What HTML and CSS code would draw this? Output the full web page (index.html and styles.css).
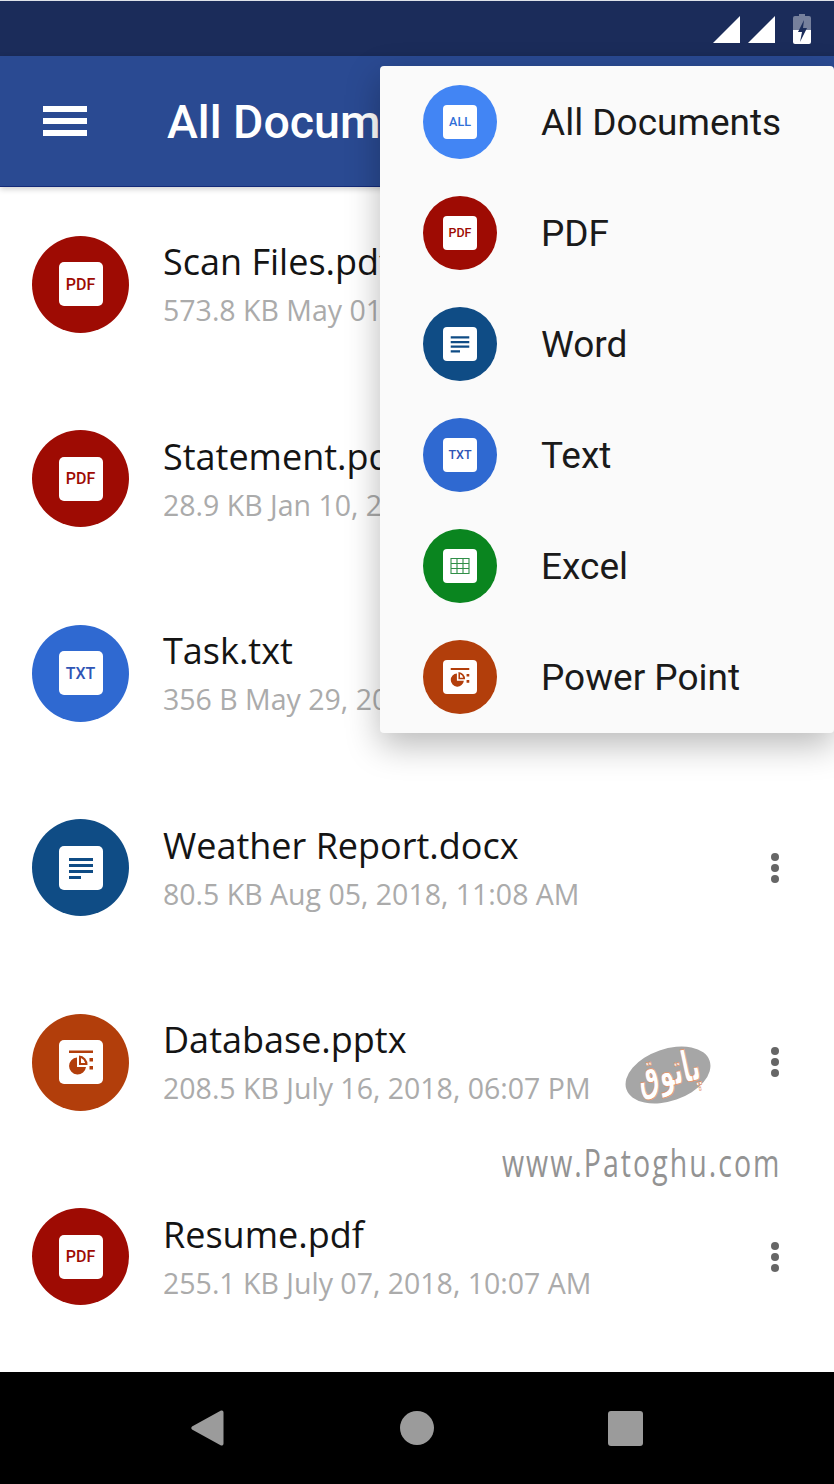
FILE: index.html
```html
<!DOCTYPE html>
<html lang="en">
<head>
    <meta charset="UTF-8">
    <meta name="viewport" content="width=device-width, initial-scale=1.0">
    <title>All Documents</title>
    <link rel="stylesheet" href="styles.css">
</head>
<body>
    <div class="phone">
        <!-- Status bar -->
        <div class="status-bar">
            <svg class="status-icon" width="122" height="32" viewBox="0 0 122 32">
                <polygon points="1,29 28,2 28,29" fill="#fff"/>
                <polygon points="36,29 63,2 63,29" fill="#fff"/>
                <path d="M87 0h6v2h4a2 2 0 0 1 2 2v12H81V4a2 2 0 0 1 2-2h4z" fill="#fff" fill-opacity="0.4"/>
                <path d="M81 16h18v12a2 2 0 0 1-2 2H83a2 2 0 0 1-2-2z" fill="#fff"/>
                <polygon points="92,6 86,18 90,18 88,28 95,14 91,14" fill="#1b2c5a"/>
            </svg>
        </div>

        <!-- Toolbar -->
        <header class="toolbar">
            <div class="hamburger"><span></span><span></span><span></span></div>
            <h1 class="toolbar-title">All Documents</h1>
        </header>

        <!-- File list -->
        <main class="file-list">
            <div class="file-row">
                <div class="badge badge-pdf"><div class="tile">PDF</div></div>
                <div class="file-info">
                    <div class="file-name">Scan Files.pdf</div>
                    <div class="file-meta">573.8 KB May 01, 2018, 09:12 AM</div>
                </div>
                <div class="kebab"><span></span><span></span><span></span></div>
            </div>
            <div class="file-row">
                <div class="badge badge-pdf"><div class="tile">PDF</div></div>
                <div class="file-info">
                    <div class="file-name">Statement.pdf</div>
                    <div class="file-meta">28.9 KB Jan 10, 2018, 04:30 PM</div>
                </div>
                <div class="kebab"><span></span><span></span><span></span></div>
            </div>
            <div class="file-row">
                <div class="badge badge-txt"><div class="tile">TXT</div></div>
                <div class="file-info">
                    <div class="file-name">Task.txt</div>
                    <div class="file-meta">356 B May 29, 2018, 02:45 PM</div>
                </div>
                <div class="kebab"><span></span><span></span><span></span></div>
            </div>
            <div class="file-row">
                <div class="badge badge-word">
                    <div class="tile">
                        <svg class="tile-icon" viewBox="0 0 44 44"><path d="M10 12h24v3H10zM10 18h24v3H10zM10 24h24v3H10zM10 30h12v3H10z" fill="currentColor"/></svg>
                    </div>
                </div>
                <div class="file-info">
                    <div class="file-name">Weather Report.docx</div>
                    <div class="file-meta">80.5 KB Aug 05, 2018, 11:08 AM</div>
                </div>
                <div class="kebab"><span></span><span></span><span></span></div>
            </div>
            <div class="file-row">
                <div class="badge badge-ppt">
                    <div class="tile">
                        <svg class="tile-icon" viewBox="0 0 44 44"><path d="M10 10.500h24v2.500H10zM30.500 18h3.500v3.500h-3.500zM30.500 26h3.500v3.500h-3.500z" fill="currentColor"/><path d="M18 17.500a8.500 8.500 0 1 0 9 9.500H18z" fill="currentColor"/><path d="M20 15.500a9 9 0 0 1 8.500 9.500H20zM22 23h4.200a7 7 0 0 0-4.200-5z" fill="currentColor" fill-rule="evenodd"/></svg>
                    </div>
                </div>
                <div class="file-info">
                    <div class="file-name">Database.pptx</div>
                    <div class="file-meta">208.5 KB July 16, 2018, 06:07 PM</div>
                </div>
                <div class="kebab"><span></span><span></span><span></span></div>
            </div>
            <div class="file-row">
                <div class="badge badge-pdf"><div class="tile">PDF</div></div>
                <div class="file-info">
                    <div class="file-name">Resume.pdf</div>
                    <div class="file-meta">255.1 KB July 07, 2018, 10:07 AM</div>
                </div>
                <div class="kebab"><span></span><span></span><span></span></div>
            </div>
        </main>

        <!-- Navigation bar -->
        <nav class="nav-bar">
            <svg class="nav-back" width="34" height="38" viewBox="0 0 34 38"><path d="M31 1.500a2 2 0 0 1 2.500 2v31a2 2 0 0 1-2.500 2L2 20.500a2 2 0 0 1 0-3z" fill="#9b9b9b"/></svg>
            <span class="nav-home"></span>
            <span class="nav-recent"></span>
        </nav>

        <!-- Filter menu -->
        <div class="filter-menu">
            <div class="menu-row">
                <div class="badge badge-all"><div class="tile">ALL</div></div>
                <span class="menu-label">All Documents</span>
            </div>
            <div class="menu-row">
                <div class="badge badge-pdf"><div class="tile">PDF</div></div>
                <span class="menu-label">PDF</span>
            </div>
            <div class="menu-row">
                <div class="badge badge-word">
                    <div class="tile">
                        <svg class="tile-icon" viewBox="0 0 44 44"><path d="M10 12h24v3H10zM10 18h24v3H10zM10 24h24v3H10zM10 30h12v3H10z" fill="currentColor"/></svg>
                    </div>
                </div>
                <span class="menu-label">Word</span>
            </div>
            <div class="menu-row">
                <div class="badge badge-txt"><div class="tile">TXT</div></div>
                <span class="menu-label">Text</span>
            </div>
            <div class="menu-row">
                <div class="badge badge-excel">
                    <div class="tile">
                        <svg class="tile-icon" viewBox="0 0 34 34"><path d="M8 9.500h18v15H8zM8 14.500h18M8 19.500h18M14 9.500v15M20 9.500v15" fill="none" stroke="currentColor" stroke-width="1.100"/></svg>
                    </div>
                </div>
                <span class="menu-label">Excel</span>
            </div>
            <div class="menu-row">
                <div class="badge badge-ppt">
                    <div class="tile">
                        <svg class="tile-icon" viewBox="0 0 44 44"><path d="M10 10.500h24v2.500H10zM30.500 18h3.500v3.500h-3.500zM30.500 26h3.500v3.500h-3.500z" fill="currentColor"/><path d="M18 17.500a8.500 8.500 0 1 0 9 9.500H18z" fill="currentColor"/><path d="M20 15.500a9 9 0 0 1 8.500 9.500H20zM22 23h4.200a7 7 0 0 0-4.200-5z" fill="currentColor" fill-rule="evenodd"/></svg>
                    </div>
                </div>
                <span class="menu-label">Power Point</span>
            </div>
        </div>

        <!-- Watermark -->
        <svg class="watermark-logo" width="90" height="64" viewBox="0 0 90 64">
            <ellipse cx="45" cy="32" rx="44" ry="26" transform="rotate(-19 45 32)" fill="#a6a6a6"/>
            <text class="watermark-arabic" text-anchor="middle" transform="rotate(-12 45 32) translate(46 43) scale(0.8 1.45)">پاتوق</text>
        </svg>
        <div class="watermark-text">www.Patoghu.com</div>
    </div>
</body>
</html>
```

FILE: styles.css
```css
body {
    margin: 0;
    background: #fff;
    font-family: "Roboto", "Liberation Sans", sans-serif;
}

.phone {
    position: relative;
    display: flex;
    flex-direction: column;
    width: 834px;
    height: 1484px;
    overflow: hidden;
}

/* Status bar */
.status-bar {
    display: flex;
    justify-content: flex-end;
    align-items: center;
    box-sizing: border-box;
    height: 56px;
    background: #1b2c5a;
    border-top: 1px solid #dfe3ea;
}

.status-icon {
    margin-top: 3px;
}

/* Toolbar */
.toolbar {
    display: flex;
    align-items: center;
    box-sizing: border-box;
    height: 131px;
    padding-left: 43px;
    background: #2a4a92;
    border-bottom: 1px solid #142a78;
    box-shadow: 0 2px 6px rgba(0, 0, 0, 0.2);
}

.hamburger {
    display: flex;
    flex-direction: column;
    gap: 6.5px;
    width: 44px;
}

.hamburger span {
    display: block;
    height: 5.500px;
    background: #fff;
}

.toolbar-title {
    width: 213px;
    margin: 2px 0 0 80px;
    overflow: hidden;
    font-size: 46.5px;
    font-weight: 500;
    color: #fff;
    white-space: nowrap;
}

/* File list */
.file-list {
    flex: 1;
    display: flex;
    flex-direction: column;
}

.file-row {
    display: flex;
    align-items: center;
    flex: none;
    height: 194.500px;
    padding: 0 55px 0 32px;
}

.badge {
    display: flex;
    justify-content: center;
    align-items: center;
    flex: none;
    width: 97px;
    height: 97px;
    border-radius: 50%;
}

.tile {
    display: flex;
    justify-content: center;
    align-items: center;
    width: 44px;
    height: 44px;
    border-radius: 5px;
    background: #fff;
    font-size: 16px;
    font-weight: 500;
}

.tile-icon {
    display: block;
    width: 100%;
    height: 100%;
}

.badge-pdf { background: #9e0b03; color: #9e0b03; }
.badge-txt { background: #2f69d1; color: #2f55b5; }
.badge-word { background: #0f4c85; color: #0f4c85; }
.badge-ppt { background: #b23e0b; color: #b23e0b; }
.badge-excel { background: #0a851f; color: #2f8f47; }
.badge-all { background: #4285f4; color: #2f6fd8; }

.file-info {
    margin-left: 34px;
    padding-top: 4px;
    white-space: nowrap;
}

.file-name {
    font-family: "Open Sans", sans-serif;
    font-size: 36px;
    line-height: 48px;
    color: #141414;
}

.file-meta {
    font-family: "Open Sans", sans-serif;
    font-size: 28.5px;
    line-height: 48px;
    color: #ababab;
}

.kebab {
    display: flex;
    flex-direction: column;
    gap: 3px;
    margin-left: auto;
}

.kebab span {
    width: 8px;
    height: 8px;
    border-radius: 50%;
    background: #666;
}

/* Navigation bar */
.nav-bar {
    display: flex;
    align-items: center;
    flex: none;
    height: 112px;
    background: #000;
}

.nav-back {
    margin: 0 0 0 190px;
}

.nav-home {
    width: 34px;
    height: 34px;
    margin-left: 176px;
    border-radius: 50%;
    background: #9b9b9b;
}

.nav-recent {
    width: 35px;
    height: 35px;
    margin-left: 174px;
    border-radius: 3px;
    background: #9b9b9b;
}

/* Filter menu */
.filter-menu {
    position: absolute;
    top: 66px;
    left: 380px;
    right: 0;
    display: flex;
    flex-direction: column;
    padding-bottom: 1px;
    border-radius: 4px;
    background: #fafafa;
    box-shadow: 0 12px 34px rgba(0, 0, 0, 0.28);
}

.menu-row {
    display: flex;
    align-items: center;
    height: 111px;
    padding-left: 43px;
}

.menu-row .badge {
    width: 74px;
    height: 74px;
}

.menu-row .tile {
    width: 34px;
    height: 34px;
    border-radius: 4px;
    font-size: 12.500px;
}

.menu-label {
    margin-left: 44px;
    padding-top: 2px;
    font-size: 37px;
    color: #1a1a1a;
}

/* Watermark */
.watermark-logo {
    position: absolute;
    top: 1043px;
    left: 623px;
}

.watermark-arabic {
    font-family: "DejaVu Sans", sans-serif;
    font-size: 30px;
    font-weight: 700;
    fill: #fff;
    stroke: #e08a5c;
    stroke-width: 0.5px;
}

.watermark-text {
    position: absolute;
    top: 1136px;
    left: 502px;
    font-family: "Open Sans", sans-serif;
    font-size: 38px;
    letter-spacing: 2.700px;
    color: #939393;
    white-space: nowrap;
    transform: scaleX(0.75);
    transform-origin: left top;
}
```
